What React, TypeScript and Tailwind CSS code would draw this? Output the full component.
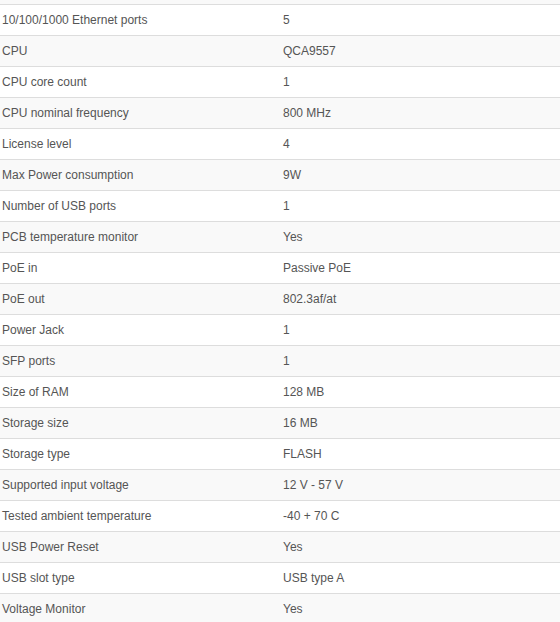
import React from "react";

const rows: [string, string][] = [
  ["10/100/1000 Ethernet ports", "5"],
  ["CPU", "QCA9557"],
  ["CPU core count", "1"],
  ["CPU nominal frequency", "800 MHz"],
  ["License level", "4"],
  ["Max Power consumption", "9W"],
  ["Number of USB ports", "1"],
  ["PCB temperature monitor", "Yes"],
  ["PoE in", "Passive PoE"],
  ["PoE out", "802.3af/at"],
  ["Power Jack", "1"],
  ["SFP ports", "1"],
  ["Size of RAM", "128 MB"],
  ["Storage size", "16 MB"],
  ["Storage type", "FLASH"],
  ["Supported input voltage", "12 V - 57 V"],
  ["Tested ambient temperature", "-40 + 70 C"],
  ["USB Power Reset", "Yes"],
  ["USB slot type", "USB type A"],
  ["Voltage Monitor", "Yes"],
];

export default function App() {
  return (
    <div
      className="w-[560px] h-[622px] overflow-hidden bg-white text-[12px] text-[#555]"
      style={{ fontFamily: '"Liberation Sans", Arial, sans-serif' }}
    >
      <div className="h-[4px] bg-[#f9f9f9]" />
      {rows.map(([k, v], i) => (
        <div
          key={k}
          className={`grid grid-cols-[281px_1fr] h-[31px] border-t border-[#dddddd] items-center ${
            i % 2 === 1 ? "bg-[#f9f9f9]" : "bg-white"
          }`}
        >
          <div className="pl-[2px]">{k}</div>
          <div className="pl-[2px]">{v}</div>
        </div>
      ))}
    </div>
  );
}
